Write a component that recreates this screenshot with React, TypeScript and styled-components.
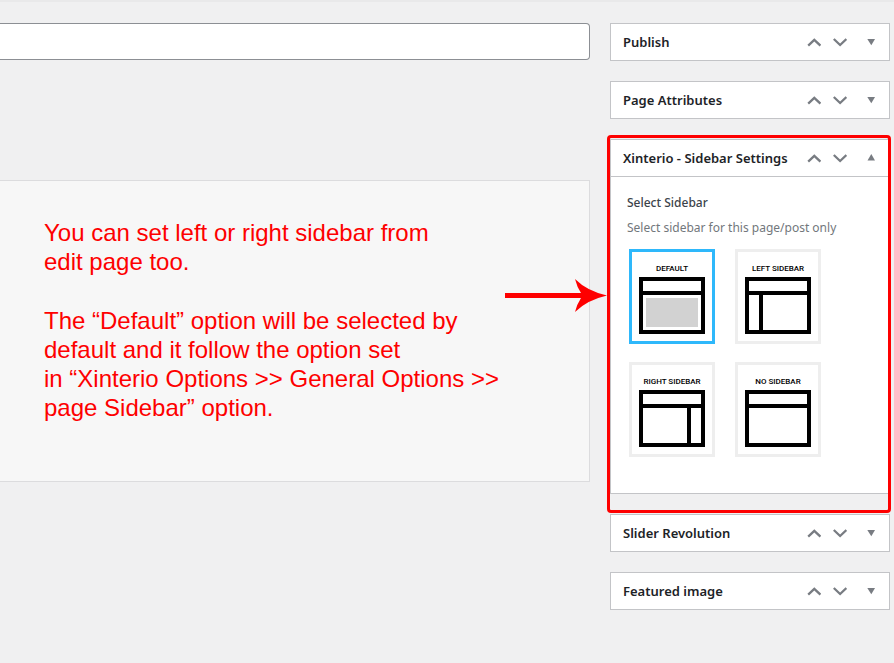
import React, { useState } from "react";
import styled, { createGlobalStyle } from "styled-components";

const GlobalStyle = createGlobalStyle`
  *, *::before, *::after { box-sizing: border-box; }
  body {
    margin: 0;
    background: #f0f0f1;
    color: #1d2327;
    font-family: "Noto Sans", "Open Sans", sans-serif;
    font-size: 13px;
    line-height: 20px;
  }
  button, input { font: inherit; }
`;

const Page = styled.div`
  min-height: 100vh;
  border-top: 2px solid #e9e9ea;
  padding: 21px 4px 20px 0;
  display: grid;
  grid-template-columns: minmax(0, 1fr) 280px;
  gap: 20px;
  align-items: start;
`;

const Main = styled.main`
  display: flex;
  flex-direction: column;
  gap: 120px;
`;

const TitleInput = styled.input`
  width: 100%;
  height: 37px;
  padding: 3px 8px;
  border: 1px solid #8c8f94;
  border-left: 0;
  border-radius: 0 4px 4px 0;
  background: #fff;
  font-size: 20px;
`;

const Notice = styled.section`
  padding: 37px 40px 59px 44px;
  border: 1px solid #dcdcde;
  border-left: 0;
  background: #f7f7f7;
  color: #fe0000;
  font-family: "Liberation Sans", Arial, sans-serif;
  font-size: 24px;
  line-height: 29px;
`;

const Paragraph = styled.p`
  margin: 0;
  white-space: pre-line;

  & + & {
    margin-top: 30px;
  }
`;

const Sidebar = styled.aside`
  display: flex;
  flex-direction: column;
  gap: 20px;
`;

const Panel = styled.section`
  border: 1px solid #c3c4c7;
  background: #fff;
`;

const PanelHeader = styled.header<{ $open?: boolean }>`
  display: flex;
  align-items: center;
  height: ${(p) => (p.$open ? 37 : 36)}px;
  border-bottom: ${(p) => (p.$open ? "1px solid #c3c4c7" : "0")};
`;

const PanelTitle = styled.h2`
  flex: 1;
  margin: 0;
  padding-left: 12px;
  font-size: 13px;
  font-weight: 600;
  white-space: nowrap;
`;

const HandleButton = styled.button<{ $wide?: boolean }>`
  display: flex;
  align-items: center;
  justify-content: center;
  width: ${(p) => (p.$wide ? 36 : 26)}px;
  height: 36px;
  padding: 0;
  border: 0;
  background: transparent;
  color: #787c82;
  cursor: pointer;
`;

const PanelBody = styled.div`
  padding: 16px 16px 36px;
`;

const Highlight = styled.div`
  position: relative;

  &::after {
    content: "";
    position: absolute;
    inset: -4px -1px -19px -3px;
    border: 3px solid #fe0000;
    border-radius: 4px;
    pointer-events: none;
  }
`;

const Arrow = styled.svg`
  position: absolute;
  left: -105px;
  top: 140px;
  pointer-events: none;
`;

const FieldSet = styled.fieldset`
  margin: 0;
  padding: 0;
  border: 0;
`;

const Legend = styled.legend`
  padding: 0;
  color: #3c434a;
  font-size: 12px;
  font-weight: 500;
`;

const Hint = styled.p`
  margin: 5px 0 11px;
  color: #72777c;
  font-size: 12px;
`;

const Choices = styled.div`
  display: grid;
  grid-template-columns: repeat(2, 86px);
  gap: 18px 20px;
  padding-left: 2px;
`;

const Choice = styled.label<{ $checked: boolean }>`
  position: relative;
  display: flex;
  flex-direction: column;
  align-items: center;
  height: 95px;
  padding-top: 12px;
  border: 3px solid ${(p) => (p.$checked ? "#2eb8fb" : "#eeeeee")};
  color: #000;
  font-family: Roboto, "Liberation Sans", sans-serif;
  font-size: 8px;
  font-weight: 500;
  line-height: 10px;
  white-space: nowrap;
  cursor: pointer;
`;

const HiddenRadio = styled.input`
  position: absolute;
  inset: 0;
  margin: 0;
  opacity: 0;
  cursor: pointer;
`;

const Diagram = styled.svg`
  margin-top: 3px;
`;

type Layout = "default" | "left" | "right" | "none";

const layouts: { id: Layout; label: string }[] = [
  { id: "default", label: "DEFAULT" },
  { id: "left", label: "LEFT SIDEBAR" },
  { id: "right", label: "RIGHT SIDEBAR" },
  { id: "none", label: "NO SIDEBAR" },
];

function LayoutDiagram({ layout }: { layout: Layout }) {
  return (
    <Diagram width="66" height="57" viewBox="0 0 66 57" aria-hidden="true">
      <rect x="2" y="2" width="62" height="53" fill="#fff" stroke="#000" strokeWidth="4" />
      <rect x="4" y="14" width="58" height="4" />
      {layout === "default" && <rect x="7" y="21" width="52" height="29" fill="#d2d2d2" />}
      {layout === "left" && <rect x="14" y="18" width="4" height="36" />}
      {layout === "right" && <rect x="48" y="18" width="4" height="36" />}
    </Diagram>
  );
}

function Chevron({ up }: { up?: boolean }) {
  return (
    <svg width="14" height="10" viewBox="0 0 14 10" fill="none" stroke="currentColor" strokeWidth="2.3" aria-hidden="true">
      <path d={up ? "M1.2 8.6 L7.3 2.8 L13.4 8.6" : "M0.8 2 L7.1 8 L13.4 2"} />
    </svg>
  );
}

function Triangle({ up }: { up?: boolean }) {
  return (
    <svg width="8" height="8" viewBox="0 0 8 8" fill="currentColor" aria-hidden="true">
      <path d={up ? "M0.5 6.5 L4.3 0 L8 6.5 Z" : "M0.3 1 L4.3 7.3 L8 1 Z"} />
    </svg>
  );
}

function MetaBox({ title, children }: { title: string; children?: React.ReactNode }) {
  const open = Boolean(children);
  return (
    <Panel>
      <PanelHeader $open={open}>
        <PanelTitle>{title}</PanelTitle>
        <HandleButton type="button" aria-label={`Move ${title} up`}>
          <Chevron up />
        </HandleButton>
        <HandleButton type="button" aria-label={`Move ${title} down`}>
          <Chevron />
        </HandleButton>
        <HandleButton type="button" $wide aria-label={`Toggle ${title}`} aria-expanded={open}>
          <Triangle up={open} />
        </HandleButton>
      </PanelHeader>
      {open && <PanelBody>{children}</PanelBody>}
    </Panel>
  );
}

export default function App() {
  const [selected, setSelected] = useState<Layout>("default");

  return (
    <>
      <GlobalStyle />
      <Page>
        <Main>
          <TitleInput type="text" aria-label="Title" />
          <Notice>
            <Paragraph>{"You can set left or right sidebar from\nedit page too."}</Paragraph>
            <Paragraph>
              {"The “Default” option will be selected by\ndefault and it follow the option set\nin “Xinterio Options >> General Options >>\npage Sidebar” option."}
            </Paragraph>
          </Notice>
        </Main>
        <Sidebar>
          <MetaBox title="Publish" />
          <MetaBox title="Page Attributes" />
          <Highlight>
            <MetaBox title="Xinterio - Sidebar Settings">
              <FieldSet>
                <Legend>Select Sidebar</Legend>
                <Hint>Select sidebar for this page/post only</Hint>
                <Choices>
                  {layouts.map(({ id, label }) => (
                    <Choice key={id} $checked={selected === id}>
                      <HiddenRadio
                        type="radio"
                        name="sidebar"
                        value={id}
                        checked={selected === id}
                        onChange={() => setSelected(id)}
                      />
                      {label}
                      <LayoutDiagram layout={id} />
                    </Choice>
                  ))}
                </Choices>
              </FieldSet>
            </MetaBox>
            <Arrow width="102" height="33" viewBox="0 0 102 33" fill="#fe0000" aria-hidden="true">
              <path d="M0 14 H76 Q72 8 70 0 Q82 12 102 16.5 Q82 21 70 33 Q72 25 76 19 H0 Z" />
            </Arrow>
          </Highlight>
          <MetaBox title="Slider Revolution" />
          <MetaBox title="Featured image" />
        </Sidebar>
      </Page>
    </>
  );
}
